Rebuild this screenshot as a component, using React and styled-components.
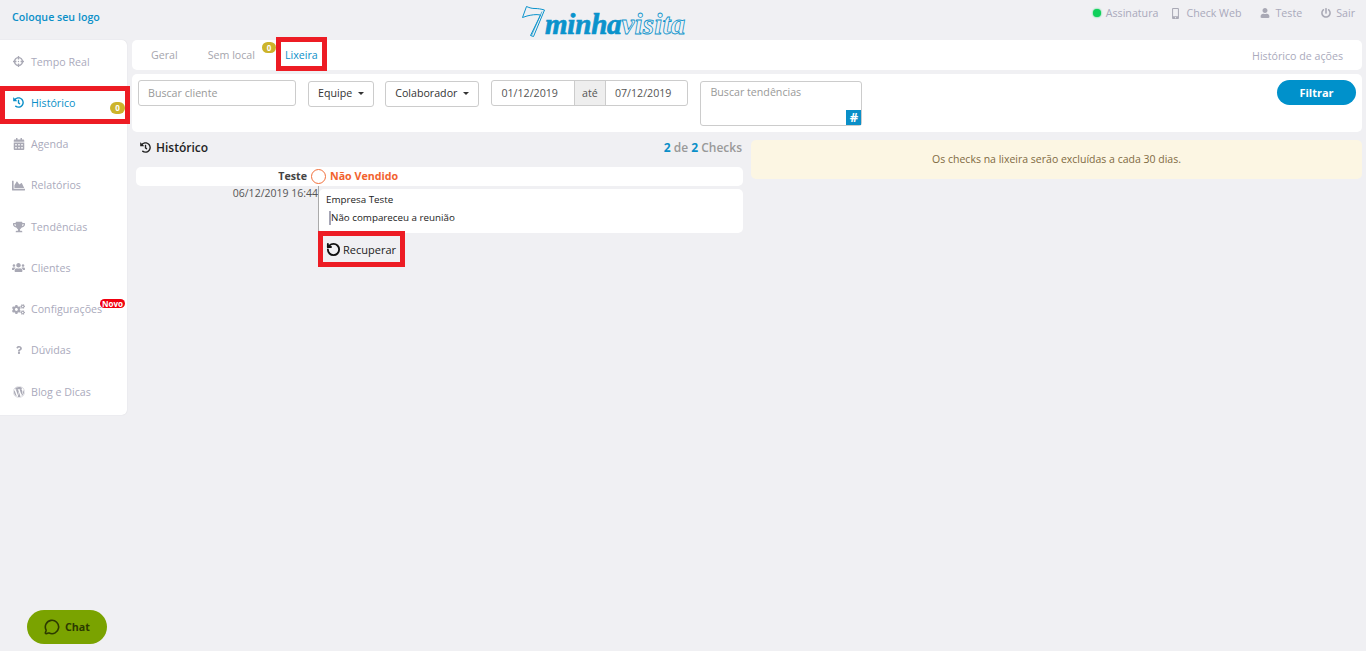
import React from 'react';
import styled, { createGlobalStyle } from 'styled-components';
import {
  FaHistory, FaCalendarAlt, FaChartArea, FaTrophy, FaUsers, FaCogs, FaQuestion,
  FaWordpress, FaMobileAlt, FaUser, FaPowerOff, FaCrosshairs,
} from 'react-icons/fa';
import { MessageCircle, RotateCcw } from 'lucide-react';

const GlobalStyle = createGlobalStyle`
  html, body { margin: 0; padding: 0; height: 100%; }
  body {
    background: #f0f0f3;
    font-family: "Open Sans", "Liberation Sans", sans-serif;
    font-size: 10.67px;
    color: #333;
    overflow: hidden;
  }
  *, *::before, *::after { box-sizing: border-box; }
`;

const navItems = [
  { label: 'Tempo Real', icon: FaCrosshairs, size: 11 },
  { label: 'Histórico', icon: FaHistory, size: 11, active: true, count: 0 },
  { label: 'Agenda', icon: FaCalendarAlt, size: 12 },
  { label: 'Relatórios', icon: FaChartArea, size: 13 },
  { label: 'Tendências', icon: FaTrophy, size: 12 },
  { label: 'Clientes', icon: FaUsers, size: 13 },
  { label: 'Configurações', icon: FaCogs, size: 13, isNew: true },
  { label: 'Dúvidas', icon: FaQuestion, size: 8 },
  { label: 'Blog e Dicas', icon: FaWordpress, size: 12 },
];

function App() {
  return (
    <Page>
      <GlobalStyle />
      <Header>
        <LogoLink>Coloque seu logo</LogoLink>
        <Brand>
          <svg width="30" height="34" viewBox="0 0 30 34" fill="none" stroke="#0a93cc" strokeWidth="1">
            <path d="M4.5 2.5 C8 4 10 4.5 13 4.5 C16 4.5 19 5 22.5 6 L11.5 32.5 L8.5 31.5 L18.5 11 C14 10 9 11 5 12 L0.5 13.5 Z" />
            <path d="M20 7.5 L9.5 31.5" strokeWidth="0.7" />
          </svg>
          <BrandBold>minha</BrandBold>
          <BrandLight>visita</BrandLight>
        </Brand>
        <TopMenu>
          <TopItem><StatusDot />Assinatura</TopItem>
          <TopItem><FaMobileAlt size={11} />Check Web</TopItem>
          <TopItem><FaUser size={10} />Teste</TopItem>
          <TopItem><FaPowerOff size={10} />Sair</TopItem>
        </TopMenu>
      </Header>

      <Body>
        <Sidebar>
          {navItems.map((item) => (
            <NavItem key={item.label} $active={item.active}>
              <NavIcon $active={item.active}><item.icon size={item.size} /></NavIcon>
              {item.label}
              {item.count !== undefined && <SideBadge>{item.count}</SideBadge>}
              {item.isNew && <NewBadge>Novo</NewBadge>}
            </NavItem>
          ))}
        </Sidebar>

        <Content>
          <Tabs>
            <Tab>Geral</Tab>
            <Tab>Sem local<TabBadge>0</TabBadge></Tab>
            <Tab $active>Lixeira</Tab>
            <TabRight>Histórico de ações</TabRight>
          </Tabs>

          <Filters>
            <ClientInput placeholder="Buscar cliente" />
            <Dropdown>Equipe<Caret /></Dropdown>
            <Dropdown>Colaborador<Caret /></Dropdown>
            <DateGroup>
              <DateValue>01/12/2019</DateValue>
              <DateSep>até</DateSep>
              <DateValue>07/12/2019</DateValue>
            </DateGroup>
            <TrendBox>
              Buscar tendências
              <Hash>#</Hash>
            </TrendBox>
            <FilterButton>Filtrar</FilterButton>
          </Filters>

          <Columns>
            <section>
              <SectionHead>
                <SectionTitle><FaHistory size={11} />Histórico</SectionTitle>
                <Counter><b>2</b> de <b>2</b> Checks</Counter>
              </SectionHead>
              <Timeline>
                <CheckRow>
                  <CheckUser>Teste</CheckUser>
                  <Circle />
                  <CheckStatus>Não Vendido</CheckStatus>
                </CheckRow>
                <DetailRow>
                  <CheckDate>06/12/2019 16:44</CheckDate>
                  <DetailCol>
                    <Card>
                      <div>Empresa Teste</div>
                      <Note>Não compareceu a reunião</Note>
                    </Card>
                    <RecoverButton>
                      <RotateCcw size={15} strokeWidth={3} color="#111" />
                      Recuperar
                    </RecoverButton>
                  </DetailCol>
                </DetailRow>
              </Timeline>
            </section>
            <Notice>Os checks na lixeira serão excluídas a cada 30 dias.</Notice>
          </Columns>
        </Content>
      </Body>

      <ChatButton>
        <MessageCircle size={16} strokeWidth={2.4} />
        Chat
      </ChatButton>
    </Page>
  );
}

const Page = styled.div`
  position: relative;
  height: 651px;
  overflow: hidden;
`;

const Header = styled.header`
  height: 40px;
  display: grid;
  grid-template-columns: 510px auto 1fr;
  align-items: start;
  padding: 0 11px 0 12px;
`;

const LogoLink = styled.a`
  margin-top: 10px;
  color: #0a8fc8;
  font-weight: 600;
`;

const Brand = styled.div`
  display: flex;
  align-items: flex-end;
  height: 36px;
  margin-top: 3px;
  color: #0a93cc;
  font-family: "Liberation Serif", serif;
  font-style: italic;
  font-size: 29px;
  line-height: 29px;
  svg { margin-right: -7px; margin-bottom: 1px; }
`;

const BrandBold = styled.span`
  font-weight: 700;
  letter-spacing: -0.2px;
  -webkit-text-stroke: 0.7px #0a93cc;
`;

const BrandLight = styled.span`
  font-weight: 700;
  letter-spacing: 0.2px;
  color: #f0f0f3;
  -webkit-text-stroke: 0.8px #0a93cc;
`;

const TopMenu = styled.nav`
  display: flex;
  justify-content: flex-end;
  gap: 19px;
  margin-top: 6px;
`;

const TopItem = styled.span`
  display: flex;
  align-items: center;
  gap: 5px;
  color: #a9a9bb;
  svg { color: #a9a9b5; }
  &:first-child { margin-right: -7px; }
`;

const StatusDot = styled.i`
  width: 8px;
  height: 8px;
  border-radius: 50%;
  background: #0fd05a;
  box-shadow: 0 0 2px #0fd05a;
`;

const Body = styled.div`
  display: flex;
  align-items: flex-start;
  gap: 5px;
  padding-right: 4px;
`;

const Sidebar = styled.aside`
  width: 127px;
  height: 375px;
  flex: none;
  padding-top: 1px;
  background: #fff;
  border-radius: 0 5px 5px 0;
  box-shadow: 0 0 1px #c9c9d0;
`;

const NavItem = styled.div`
  position: relative;
  height: 41.25px;
  display: flex;
  align-items: center;
  padding-left: 12px;
  color: ${(p) => (p.$active ? '#0a8fc8' : '#aaaabc')};

  ${(p) => p.$active && `
    &::after {
      content: "";
      position: absolute;
      left: 0;
      top: 4px;
      width: 130px;
      height: 38px;
      border: 5px solid #ed1c24;
    }
  `}
`;

const NavIcon = styled.span`
  width: 19px;
  display: flex;
  justify-content: center;
  padding-right: 6px;
  color: ${(p) => (p.$active ? '#0a8fc8' : '#a9a9b5')};
`;

const SideBadge = styled.span`
  position: absolute;
  right: 2px;
  top: 20px;
  width: 15px;
  height: 12px;
  border-radius: 6px;
  background: #cdb42a;
  color: #fff;
  font-size: 8px;
  font-weight: 700;
  line-height: 12px;
  text-align: center;
`;

const NewBadge = styled.span`
  position: absolute;
  right: 2px;
  top: 10px;
  width: 25px;
  height: 9px;
  border-radius: 5px;
  background: #f0000f;
  color: #fff;
  font-size: 8px;
  font-weight: 700;
  line-height: 9px;
  text-align: center;
`;

const Content = styled.main`
  flex: 1;
  min-width: 0;
`;

const Tabs = styled.div`
  height: 30px;
  display: flex;
  align-items: center;
  padding: 0 19px 1px;
  background: #fff;
  border-radius: 5px;
`;

const Tab = styled.span`
  position: relative;
  margin-right: ${(p) => (p.$active ? '0' : '30px')};
  color: ${(p) => (p.$active ? '#0a8fc8' : '#a5a5ad')};

  ${(p) => p.$active && `
    &::after {
      content: "";
      position: absolute;
      left: -9px;
      top: -11px;
      width: 51px;
      height: 34px;
      border: 5px solid #ed1c24;
    }
  `}
`;

const TabBadge = styled.span`
  position: absolute;
  right: -21px;
  top: -6px;
  width: 14px;
  height: 11px;
  border-radius: 6px;
  background: #cdb42a;
  color: #fff;
  font-size: 8px;
  font-weight: 700;
  line-height: 11px;
  text-align: center;
`;

const TabRight = styled.span`
  margin-left: auto;
  padding-top: 2px;
  color: #aaaabc;
`;

const Filters = styled.div`
  height: 58px;
  margin-top: 4px;
  padding: 6px 6px 0;
  display: flex;
  align-items: flex-start;
  background: #fff;
  border-radius: 5px;
`;

const ClientInput = styled.input`
  width: 158px;
  height: 26px;
  padding: 0 9px;
  margin-right: 12px;
  border: 1px solid #ccc;
  border-radius: 3px;
  font: inherit;
  outline: none;
  &::placeholder { color: #999; opacity: 1; }
`;

const Dropdown = styled.button`
  height: 26px;
  margin: 1px 11px 0 0;
  padding: 0 9px 2px;
  display: flex;
  align-items: center;
  gap: 6px;
  background: #fff;
  border: 1px solid #ccc;
  border-radius: 3px;
  color: #333;
  font: inherit;
`;

const Caret = styled.i`
  border-top: 3px solid #333;
  border-left: 3px solid transparent;
  border-right: 3px solid transparent;
`;

const DateGroup = styled.div`
  width: 197px;
  height: 26px;
  margin: 0 12px 0 1px;
  display: flex;
  border: 1px solid #ccc;
  border-radius: 3px;
  color: #555;
`;

const DateValue = styled.span`
  flex: 1;
  display: flex;
  align-items: center;
  padding: 0 0 1px 9px;
`;

const DateSep = styled.span`
  width: 32px;
  flex: none;
  display: flex;
  align-items: center;
  justify-content: center;
  padding-bottom: 1px;
  background: #eee;
  border: solid #ccc;
  border-width: 0 1px;
`;

const TrendBox = styled.div`
  position: relative;
  width: 162px;
  height: 45px;
  margin-top: 1px;
  padding: 3px 9px;
  border: 1px solid #ccc;
  border-radius: 3px;
  color: #999;
`;

const Hash = styled.span`
  position: absolute;
  right: 0;
  bottom: 0;
  width: 15px;
  height: 15px;
  background: #0a8fc8;
  color: #fff;
  font-size: 13px;
  font-weight: 700;
  line-height: 15px;
  text-align: center;
`;

const FilterButton = styled.button`
  width: 79px;
  height: 25px;
  margin-left: auto;
  background: #0091cb;
  border: 0;
  border-radius: 13px;
  color: #fff;
  font: inherit;
  font-size: 11px;
  font-weight: 700;
`;

const Columns = styled.div`
  display: grid;
  grid-template-columns: 614px 1fr;
  gap: 5px;
  margin-top: 8px;
`;

const SectionHead = styled.div`
  height: 14px;
  margin-bottom: 13px;
  display: flex;
  align-items: center;
  justify-content: space-between;
  padding: 0 4px 0 8px;
`;

const SectionTitle = styled.div`
  display: flex;
  align-items: center;
  gap: 5px;
  color: #222;
  font-size: 12px;
  font-weight: 600;
`;

const Counter = styled.div`
  color: #999;
  font-size: 12px;
  font-weight: 600;
  b { color: #0a8fc8; font-weight: 700; }
`;

const Timeline = styled.div`
  position: relative;
  padding-left: 4px;
  &::before {
    content: "";
    position: absolute;
    left: 186px;
    top: 0;
    height: 100px;
    width: 1px;
    background: #aaa;
  }
`;

const CheckRow = styled.div`
  position: relative;
  width: 607px;
  height: 19px;
  padding-bottom: 1px;
  display: flex;
  align-items: center;
  background: #fff;
  border-radius: 5px;
`;

const CheckUser = styled.span`
  width: 171px;
  text-align: right;
  color: #444;
  font-weight: 700;
`;

const Circle = styled.i`
  width: 15px;
  height: 15px;
  margin: 0 4px 0 4px;
  flex: none;
  background: #fff;
  border: 1px solid #f2703c;
  border-radius: 50%;
`;

const CheckStatus = styled.span`
  color: #f2622e;
  font-weight: 700;
`;

const DetailRow = styled.div`
  display: flex;
`;

const CheckDate = styled.div`
  width: 182px;
  flex: none;
  color: #555;
  font-size: 10.5px;
  text-align: right;
  white-space: nowrap;
`;

const DetailCol = styled.div`
  flex: 1;
  padding: 3px 0 0 1px;
`;

const Card = styled.div`
  width: 424px;
  height: 44px;
  padding: 4px 7px;
  background: #fff;
  border-radius: 5px;
  color: #222;
  font-size: 9.8px;
  line-height: 14px;
`;

const Note = styled.div`
  margin: 4px 0 0 3px;
  border-left: 2px solid #a5a5b5;
`;

const RecoverButton = styled.button`
  margin: -2px 0 0 -1px;
  position: relative;
  width: 87px;
  height: 36px;
  padding: 0 0 0 3px;
  display: flex;
  align-items: center;
  gap: 2px;
  background: transparent;
  border: 5px solid #ed1c24;
  color: #222;
  font: inherit;
  font-size: 11px;
`;

const Notice = styled.div`
  height: 39px;
  padding-bottom: 2px;
  display: flex;
  align-items: center;
  justify-content: center;
  background: #fcf6e3;
  border-radius: 5px;
  color: #7f6a42;
  font-size: 10.5px;
`;

const ChatButton = styled.button`
  position: absolute;
  left: 27px;
  top: 610px;
  width: 80px;
  height: 34px;
  padding: 0 0 1px;
  display: flex;
  align-items: center;
  justify-content: center;
  gap: 5px;
  background: #7aa300;
  border: 0;
  border-radius: 17px;
  color: #2c3a00;
  font: inherit;
  font-weight: 700;
`;

export default App;
